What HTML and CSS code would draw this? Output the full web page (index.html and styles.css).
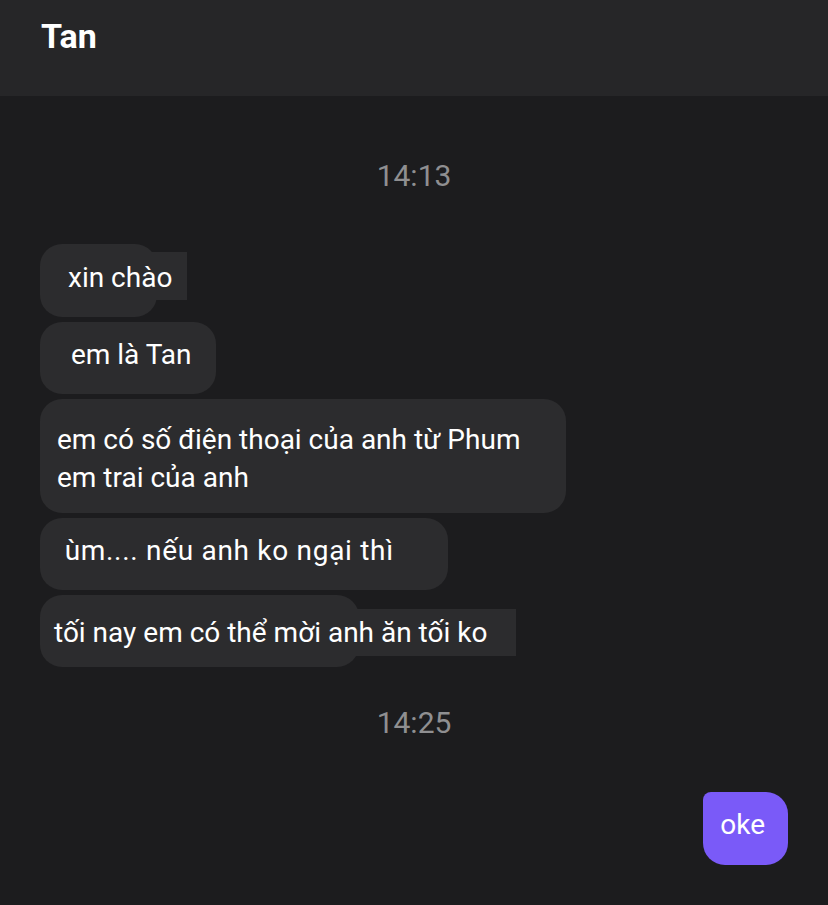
FILE: index.html
```html
<!DOCTYPE html>
<html lang="vi">
<head>
    <meta charset="UTF-8">
    <meta name="viewport" content="width=device-width, initial-scale=1.0">
    <title>Tan</title>
    <link rel="stylesheet" href="styles.css">
</head>
<body>

<div class="app">
    <!-- Header -->
    <div class="header">
        <h1 class="contact-name">Tan</h1>
    </div>

    <!-- Messages -->
    <div class="chat">
        <div class="time time-first">14:13</div>

        <div class="bubble bubble-split split-short"><span class="bubble-text">xin chào</span></div>
        <div class="bubble">  em là Tan</div>
        <div class="bubble bubble-multi">em có số điện thoại của anh từ Phum em trai của anh</div>
        <div class="bubble bubble-loose"> ùm.... nếu anh ko ngại thì    </div>
        <div class="bubble bubble-split split-long"><span class="bubble-text">tối nay em có thể mời anh ăn tối ko</span></div>

        <div class="time time-second">14:25</div>

        <div class="bubble bubble-mine">oke</div>
    </div>
</div>

</body>
</html>
```

FILE: styles.css
```css
body {
    margin: 0;
    background-color: #1c1c1e;
    font-family: Roboto, "Noto Sans", Arial, sans-serif;
    color: #ffffff;
}

.app {
    width: 828px;
    min-height: 905px;
}

.header {
    height: 96px;
    box-sizing: border-box;
    padding: 16px 41px 0;
    background-color: #262628;
}

.contact-name {
    margin: 0;
    font-size: 34px;
    line-height: 40px;
    font-weight: bold;
}

.chat {
    display: flex;
    flex-direction: column;
    align-items: flex-start;
    padding: 0 40px;
}

.time {
    align-self: stretch;
    text-align: center;
    font-size: 30px;
    line-height: 36px;
    color: #8f8f91;
}

.time-first {
    margin: 62px 0 50px;
}

.time-second {
    margin: 38px 0 51px;
}

.bubble {
    background-color: #2c2c2e;
    border-radius: 22px;
    padding: 14px 24px 20px 17px;
    font-size: 28px;
    line-height: 38px;
    white-space: pre;
}

.bubble + .bubble {
    margin-top: 5px;
}

.bubble-multi {
    box-sizing: border-box;
    max-width: 526px;
    padding: 22px 24px 16px 17px;
    white-space: normal;
}

.bubble-loose {
    letter-spacing: 0.7px;
}

/* text box sticks out past the rounded bubble */
.bubble-split {
    padding-right: 0;
}

.bubble-text {
    display: inline-block;
    background-color: #2c2c2e;
}

.split-short {
    padding: 8px 0 17px 13px;
}

.split-short .bubble-text {
    padding: 7px 15px 3px 15px;
    margin-right: -30px;
}

.split-long {
    padding: 14px 0 11px 4px;
}

.split-long .bubble-text {
    padding: 5px 29px 4px 10px;
    margin-right: -157px;
}

.bubble-mine {
    align-self: flex-end;
    background-color: #7a5af8;
    padding: 14px 23px 21px 17px;
    border-top-left-radius: 8px;
}
```
